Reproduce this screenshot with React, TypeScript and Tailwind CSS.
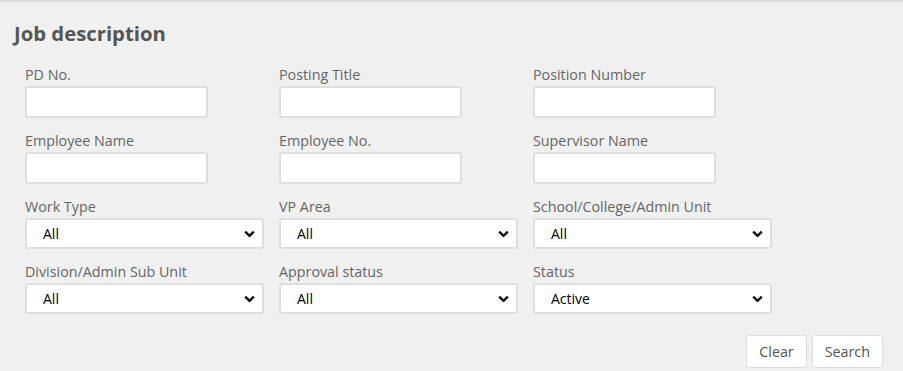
import { ChangeEvent, useState } from 'react';

type Field = {
  label: string;
  kind: 'text' | 'select';
  options?: string[];
  value?: string;
};

const textRows: Field[][] = [
  [
    { label: 'PD No.', kind: 'text' },
    { label: 'Posting Title', kind: 'text' },
    { label: 'Position Number', kind: 'text' },
  ],
  [
    { label: 'Employee Name', kind: 'text' },
    { label: 'Employee No.', kind: 'text' },
    { label: 'Supervisor Name', kind: 'text' },
  ],
];

const selectRows: Field[][] = [
  [
    { label: 'Work Type', kind: 'select', options: ['All'], value: 'All' },
    { label: 'VP Area', kind: 'select', options: ['All'], value: 'All' },
    { label: 'School/College/Admin Unit', kind: 'select', options: ['All'], value: 'All' },
  ],
  [
    { label: 'Division/Admin Sub Unit', kind: 'select', options: ['All'], value: 'All' },
    { label: 'Approval status', kind: 'select', options: ['All'], value: 'All' },
    { label: 'Status', kind: 'select', options: ['All', 'Active', 'Inactive'], value: 'Active' },
  ],
];

function Chevron() {
  return (
    <svg
      className="pointer-events-none absolute right-[9px] top-1/2 -translate-y-1/2"
      width="11"
      height="7"
      viewBox="0 0 11 7"
      fill="none"
    >
      <path d="M1.2 1.2 L5.5 5.3 L9.8 1.2" stroke="#111" strokeWidth="2.5" />
    </svg>
  );
}

function SelectField({ field }: { field: Field }) {
  const [value, setValue] = useState(field.value || '');
  return (
    <div className="flex flex-col">
      <label className="mb-[1px] pt-[2px] text-[14.3px] leading-[20px] text-[#666]">{field.label}</label>
      <div className="relative w-[239px]">
        <select
          value={value}
          onChange={(e: ChangeEvent<HTMLSelectElement>) => setValue(e.target.value)}
          className="h-[31px] w-full appearance-none rounded-[3px] border-2 border-[#dedede] bg-white pl-[16px] pr-8 text-[14px] text-black outline-none"
        >
          {field.options?.map((o) => (
            <option key={o} value={o}>
              {o}
            </option>
          ))}
        </select>
        <Chevron />
      </div>
    </div>
  );
}

function TextField({ field }: { field: Field }) {
  const [value, setValue] = useState('');
  return (
    <div className="flex flex-col">
      <label className="mb-[1px] pt-[2px] text-[14.3px] leading-[20px] text-[#666]">{field.label}</label>
      <input
        type="text"
        value={value}
        onChange={(e) => setValue(e.target.value)}
        className="h-[32px] w-[183px] rounded-[3px] border-2 border-[#dedede] bg-white px-2 text-[14px] outline-none"
      />
    </div>
  );
}

export default function App() {
  return (
    <div
      className="min-h-[371px] border-t-2 border-[#dcdcdc] bg-[#f0f0f0] pl-[14px] pr-[20px] pt-[17px]"
      style={{ fontFamily: '"Open Sans", "Liberation Sans", sans-serif' }}
    >
      <h2 className="text-[20.3px] font-bold leading-[28px] text-[#555]">Job description</h2>

      <form className="ml-[11px] mt-[16px] flex flex-col gap-y-[11px]">
        {textRows.map((row, i) => (
          <div key={i} className="grid grid-cols-[254px_254px_254px]">
            {row.map((f) => (
              <TextField key={f.label} field={f} />
            ))}
          </div>
        ))}
        {selectRows.map((row, i) => (
          <div key={i} className="grid grid-cols-[254px_254px_254px]">
            {row.map((f) => (
              <SelectField key={f.label} field={f} />
            ))}
          </div>
        ))}
      </form>

      <div className="mt-[21px] flex justify-end gap-[5px]">
        <button
          type="button"
          className="h-[33px] rounded-[3px] border border-[#dddddd] bg-white px-[12px] text-[14.3px] text-[#555]"
        >
          Clear
        </button>
        <button
          type="button"
          className="h-[33px] rounded-[3px] border border-[#dddddd] bg-white px-[12px] text-[14.3px] text-[#555]"
        >
          Search
        </button>
      </div>
    </div>
  );
}
